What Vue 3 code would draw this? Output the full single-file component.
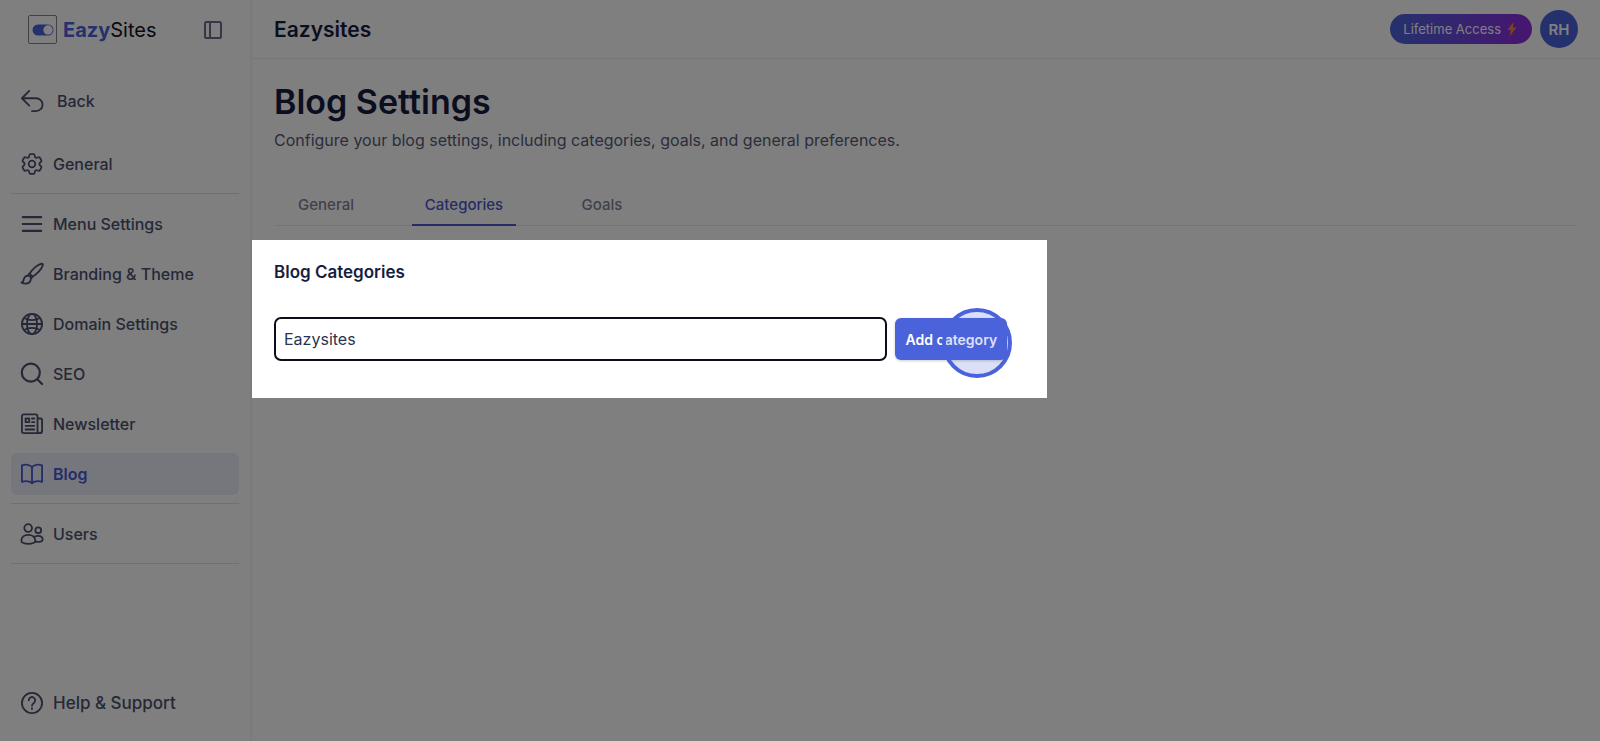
<script setup>
import { ref } from 'vue'

const category = ref('Eazysites')
const tabs = ['General', 'Categories', 'Goals']
const activeTab = ref('Categories')

const groups = [
  [{ label: 'General', icon: 'gear' }],
  [
    { label: 'Menu Settings', icon: 'menu' },
    { label: 'Branding & Theme', icon: 'brush' },
    { label: 'Domain Settings', icon: 'globe' },
    { label: 'SEO', icon: 'search' },
    { label: 'Newsletter', icon: 'news' },
    { label: 'Blog', icon: 'book', active: true },
  ],
  [{ label: 'Users', icon: 'users' }],
]

const icons = {
  gear: {
    box: '2 2 20 20',
    paths: [
      'M9.594 3.94c.09-.542.56-.94 1.11-.94h2.593c.55 0 1.02.398 1.11.94l.213 1.281c.063.374.313.686.645.87.074.04.147.083.22.127.325.196.72.257 1.075.124l1.217-.456a1.125 1.125 0 0 1 1.37.49l1.296 2.247a1.125 1.125 0 0 1-.26 1.431l-1.003.827c-.293.241-.438.613-.43.992a7.723 7.723 0 0 1 0 .255c-.008.378.137.75.43.991l1.004.827c.424.35.534.955.26 1.43l-1.298 2.247a1.125 1.125 0 0 1-1.369.491l-1.217-.456c-.355-.133-.75-.072-1.076.124a6.47 6.47 0 0 1-.22.128c-.331.183-.581.495-.644.869l-.213 1.281c-.09.543-.56.94-1.11.94h-2.594c-.55 0-1.019-.398-1.11-.94l-.213-1.281c-.062-.374-.312-.686-.644-.87a6.52 6.52 0 0 1-.22-.127c-.325-.196-.72-.257-1.076-.124l-1.217.456a1.125 1.125 0 0 1-1.369-.49l-1.297-2.247a1.125 1.125 0 0 1 .26-1.431l1.004-.827c.292-.24.437-.613.43-.991a6.932 6.932 0 0 1 0-.255c.007-.38-.138-.751-.43-.992l-1.004-.827a1.125 1.125 0 0 1-.26-1.43l1.297-2.247a1.125 1.125 0 0 1 1.37-.491l1.216.456c.356.133.751.072 1.076-.124.072-.044.146-.086.22-.128.332-.183.582-.495.644-.869l.214-1.28Z',
      'M15 12a3 3 0 1 1-6 0 3 3 0 0 1 6 0Z',
    ],
  },
  menu: { paths: ['M2 4.500h20M2 12h20M2 19.500h20'] },
  brush: {
    paths: [
      'M9.500 11.500C12 7 18 1.500 22.500.8c1.300-.1 1.600.7 1.300 1.700C22.500 7 17 12.500 12.500 15z',
      'M9.500 11.500c-1 .2-1.600 1-1.700 2.200M12.500 15c-.2 1-.8 1.600-1.700 1.800',
      'M7.800 13.700c2 .2 3.200 1.600 3 3.400c-.3 4.800-4.500 6.900-10.300 4.300c2.500-.6 2.100-2.400 2.700-4.200c.7-2.200 2.300-3.600 4.600-3.500z',
    ],
  },
  globe: {
    paths: [
      'M23 12a11 11 0 1 1-22 0a11 11 0 0 1 22 0z',
      'M17.500 12c0 6-2.500 11-5.500 11s-5.500-5-5.500-11S9 1 12 1s5.500 5 5.500 11z',
      'M3.500 5.500c4.500 3 12.500 3 17 0M3.500 18.500c4.500-3 12.500-3 17 0M1 12h22',
    ],
  },
  search: { paths: ['M20.500 10.500a9.800 9.800 0 1 1-19.600 0a9.800 9.800 0 0 1 19.600 0z', 'M17.700 17.700l5.300 5.300'] },
  news: {
    paths: [
      'M18 6v13.500a2.500 2.500 0 0 0 5 0V7.500A1.500 1.500 0 0 0 21.500 6H18V3.500A2 2 0 0 0 16 1.500H3a2 2 0 0 0-2 2V20a2 2 0 0 0 2 2h17.500',
      'M5 6h4v4H5zM12 6h2.500M12 10h2.500M5 14h9.500M5 18h9.500',
    ],
  },
  book: {
    paths: ['M12 4.500C9.500 1.800 5 1.300 1 2.500v18c4-1 8.500-.8 11 1.700c2.500-2.500 7-2.700 11-1.700v-18C19 1.300 14.500 1.800 12 4.500zM12 4.500v17.700'],
  },
  users: {
    paths: [
      'M12 5.500a4.200 4.200 0 1 1-8.400 0a4.200 4.200 0 0 1 8.400 0z',
      'M22 8a3.200 3.200 0 1 1-6.400 0A3.200 3.200 0 0 1 22 8z',
      'M.4 19.500C.4 15.500 3.500 13 8 13s7.600 2.500 7.600 6.500c0 1.800-3.300 3.300-7.600 3.300S.4 21.300.4 19.500z',
      'M13.800 15.500c1-1 2.500-1.500 4.700-1.500c3.200 0 5.200 1.700 5.200 4.200c0 1.800-3.700 2.800-8 2.200',
    ],
  },
}
</script>

<template>
  <div class="app">
    <aside class="sidebar">
      <div class="brand">
        <a href="#" class="logo">
          <span class="mark">
            <svg viewBox="0 0 22 12" width="22" height="12" aria-hidden="true">
              <rect x=".5" y=".5" width="21" height="11" rx="5.500" fill="#4a63db" />
              <circle cx="16" cy="6" r="4.700" fill="#fff" />
            </svg>
          </span>
          <span class="wordmark"><b>Eazy</b>Sites</span>
        </a>
        <button class="toggle" aria-label="Toggle sidebar">
          <svg viewBox="0 0 18 18" width="18" height="18" aria-hidden="true">
            <rect x="1" y="1" width="16" height="16" rx="1.500" />
            <path d="M6 1v16" />
          </svg>
        </button>
      </div>

      <a href="#" class="item back">
        <svg viewBox="0 0 24 24" class="icon" aria-hidden="true">
          <path d="M9 1L1 9l8 8M1 9h15.500a6.900 6.900 0 0 1 0 14H12" />
        </svg>
        <span>Back</span>
      </a>

      <nav class="nav">
        <div v-for="(group, g) in groups" :key="g" class="group">
          <a
            v-for="item in group"
            :key="item.label"
            href="#"
            class="item"
            :class="{ active: item.active }"
          >
            <svg
              :viewBox="icons[item.icon].box || '0 0 24 24'"
              class="icon"
              :class="item.icon"
              aria-hidden="true"
            >
              <path v-for="d in icons[item.icon].paths" :key="d" :d="d" />
            </svg>
            <span>{{ item.label }}</span>
          </a>
        </div>
      </nav>

      <a href="#" class="item help">
        <svg viewBox="0 0 24 24" class="icon" aria-hidden="true">
          <circle cx="12" cy="12" r="11" />
          <path d="M8.500 9a3.500 3.500 0 1 1 5.500 2.900c-1.300.9-2 1.500-2 3M12 17.600v1" />
        </svg>
        <span>Help &amp; Support</span>
      </a>
    </aside>

    <div class="page">
      <header class="topbar">
        <strong class="site">Eazysites</strong>
        <div class="account">
          <button class="pill">
            Lifetime Access
            <svg viewBox="0 0 10 14" width="10" height="14" aria-hidden="true">
              <path d="M6.500 0L.5 8h3.300L2.800 14L9.500 5.500H5.800z" fill="#f58a3c" />
            </svg>
          </button>
          <button class="avatar">RH</button>
        </div>
      </header>

      <main>
        <div class="intro">
          <h1>Blog Settings</h1>
          <p>Configure your blog settings, including categories, goals, and general preferences.</p>
          <div class="tabs" role="tablist">
            <button
              v-for="tab in tabs"
              :key="tab"
              role="tab"
              class="tab"
              :class="{ on: tab === activeTab }"
              :aria-selected="tab === activeTab"
              @click="activeTab = tab"
            >{{ tab }}</button>
          </div>
        </div>

        <section class="spotlight">
          <h2><label for="category">Blog Categories</label></h2>
          <form class="row" @submit.prevent>
            <input id="category" v-model="category" type="text" />
            <div class="action">
              <button type="submit" class="add">Add category</button>
              <span class="pointer"></span>
            </div>
          </form>
        </section>
      </main>
    </div>
  </div>
</template>

<style>
body {
  margin: 0;
}
</style>

<style scoped>
.app {
  display: flex;
  min-height: 100vh;
  overflow: hidden;
  background: #fff;
  color: #171d3f;
  font-family: Inter, "Liberation Sans", sans-serif;
  font-size: 16px;
}
.app *,
.app {
  box-sizing: border-box;
}
button,
input {
  font: inherit;
  border: 0;
  margin: 0;
}
button {
  padding: 0;
  background: none;
  cursor: pointer;
}
a {
  color: inherit;
  text-decoration: none;
}
svg {
  display: block;
  flex: none;
}

.sidebar {
  display: flex;
  flex-direction: column;
  flex: none;
  width: 252px;
  padding: 0 11px 17px;
  border-right: 2px solid #f6f6f8;
  color: #4c5170;
}
.brand {
  display: flex;
  align-items: center;
  justify-content: space-between;
  height: 59px;
  margin-bottom: 21px;
  padding: 0 17px;
}
.logo {
  display: flex;
  align-items: center;
  gap: 6px;
}
.mark {
  display: grid;
  place-items: center;
  width: 29px;
  height: 29px;
  border: 1px solid #858585;
  border-radius: 2px;
}
.wordmark {
  color: #12121e;
  font-size: 20px;
}
.wordmark b {
  color: #4a63db;
}
.toggle svg {
  fill: none;
  stroke: #6a6f8c;
  stroke-width: 2;
}
.item {
  display: flex;
  align-items: center;
  gap: 10px;
  height: 42px;
  padding: 0 10px;
  border-radius: 6px;
  font-weight: 500;
}
.active {
  background: #eceefb;
  color: #4a59d0;
  font-weight: 600;
}
.back {
  gap: 14px;
  margin-bottom: 21px;
}
.icon {
  width: 22px;
  height: 22px;
  overflow: visible;
  fill: none;
  stroke: currentColor;
  stroke-width: 2;
  stroke-linecap: round;
  stroke-linejoin: round;
}
.gear {
  stroke-width: 1.6;
}
.menu,
.search {
  stroke-width: 2.4;
}
.group {
  display: flex;
  flex-direction: column;
  gap: 8px;
  padding-bottom: 8px;
  margin-bottom: 9px;
  border-bottom: 1px solid #dfe1ec;
}
.help {
  margin-top: auto;
  font-size: 17px;
}

.page {
  flex: 1;
  min-width: 0;
}
.topbar {
  display: flex;
  align-items: center;
  justify-content: space-between;
  height: 59px;
  padding: 0 22px;
  border-bottom: 1px solid #eeeef1;
}
.site {
  font-size: 21px;
  font-weight: 600;
}
.account {
  display: flex;
  align-items: center;
  gap: 8px;
}
.pill {
  display: flex;
  align-items: center;
  gap: 6px;
  height: 30px;
  padding: 0 15px 0 13px;
  border-radius: 15px;
  background: linear-gradient(90deg, #4a63db, #8f2be0);
  color: #fff;
  font-size: 13px;
}
.avatar {
  width: 38px;
  height: 38px;
  border-radius: 50%;
  background: #4a63db;
  color: #fff;
  font-size: 15px;
  font-weight: 600;
}

.intro {
  padding: 23px 24px 14px 22px;
}
h1 {
  margin: 0;
  font-size: 34px;
  line-height: 40px;
  font-weight: 600;
}
p {
  margin: 6px 0 0;
  color: #565b78;
  font-size: 16px;
  line-height: 24px;
}
.tabs {
  display: flex;
  gap: 34px;
  margin-top: 32px;
  border-bottom: 1px solid #ebebef;
}
.tab {
  width: 104px;
  height: 42px;
  margin-bottom: -1px;
  border-bottom: 2px solid transparent;
  color: #7d829c;
  font-size: 15px;
  font-weight: 500;
}
.on {
  border-color: #4a59d0;
  color: #4a59d0;
}

.spotlight {
  position: relative;
  width: 59%;
  padding: 20px 40px 37px 22px;
  background: #fff;
  box-shadow: 0 0 0 200vmax rgba(0, 0, 0, 0.5);
}
h2 {
  margin: 0 0 33px;
  font-size: 17px;
  line-height: 24px;
  font-weight: 600;
}
.row {
  display: flex;
  gap: 8px;
}
input {
  flex: 1;
  min-width: 0;
  height: 44px;
  padding: 0 8px;
  border: 2px solid #0c0d18;
  border-radius: 7px;
  outline: 0;
  background: #fff;
  color: #2a3452;
}
.action {
  position: relative;
  padding: 1px 0;
}
.add {
  width: 112px;
  height: 42px;
  border-radius: 6px;
  background: #4a63db;
  box-shadow: 0 1px 3px rgba(0, 0, 0, 0.2);
  color: #fff;
  font-size: 14px;
  font-weight: 600;
}
.pointer {
  position: absolute;
  top: -9px;
  right: -5px;
  width: 70px;
  height: 70px;
  border: 4px solid #4a63db;
  border-radius: 50%;
  background: rgba(74, 99, 219, 0.2);
  pointer-events: none;
}
</style>
